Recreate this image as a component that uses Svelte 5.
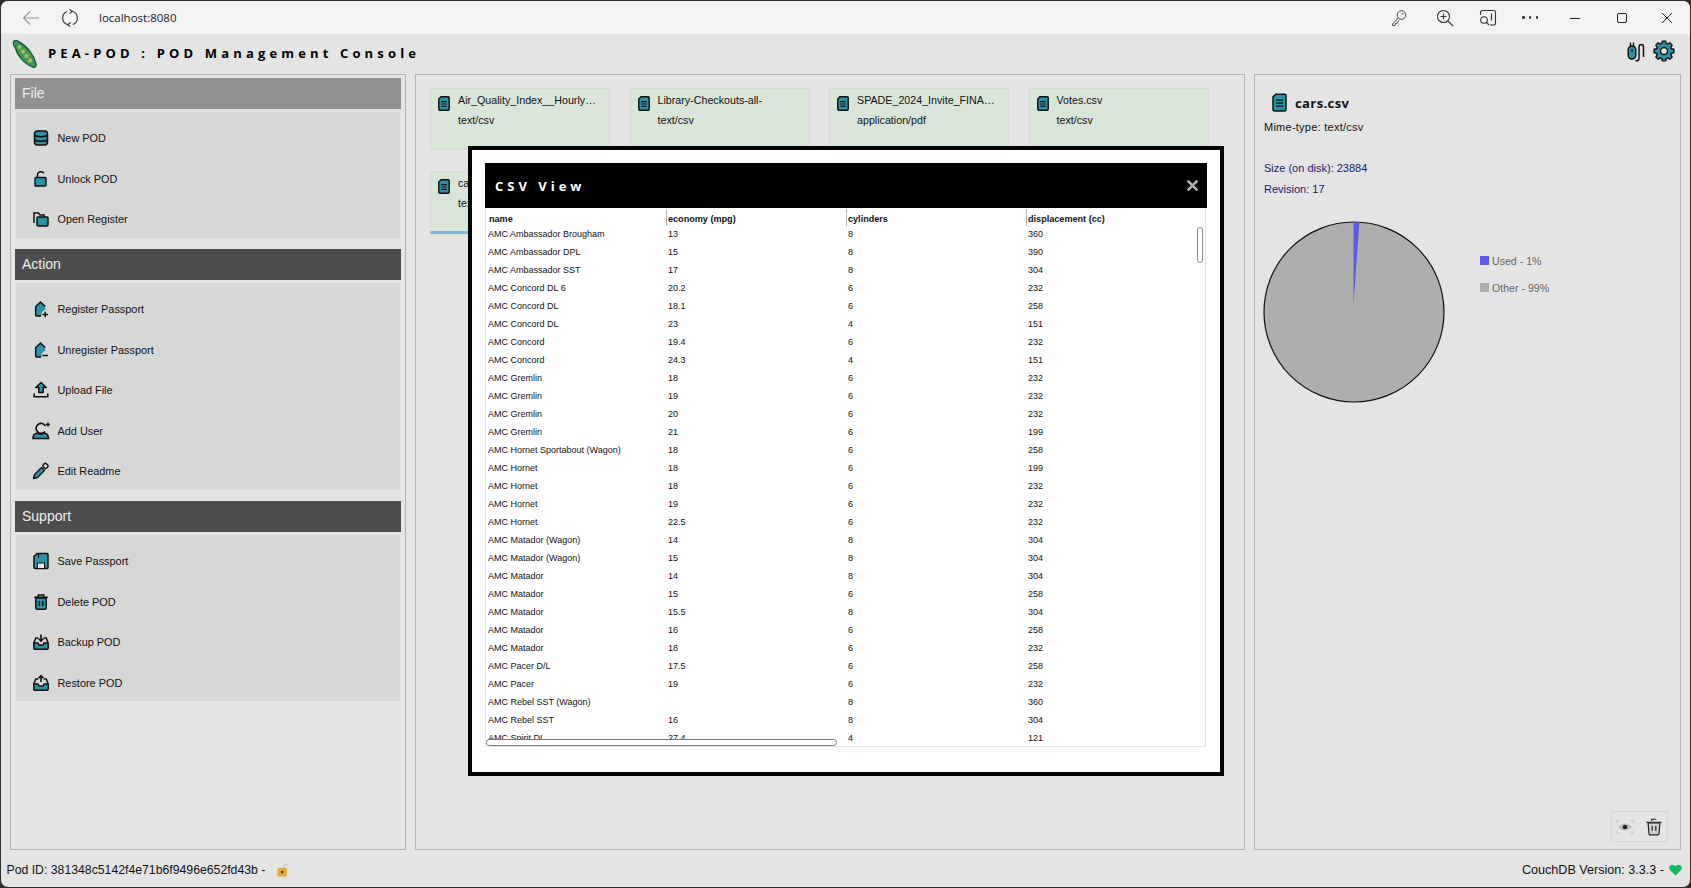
<script>
	const sections = [
		{ title: 'File', muted: true, items: [['New POD', 'db'], ['Unlock POD', 'lock'], ['Open Register', 'folder']] },
		{
			title: 'Action',
			items: [
				['Register Passport', 'regplus'],
				['Unregister Passport', 'regminus'],
				['Upload File', 'upload'],
				['Add User', 'user'],
				['Edit Readme', 'pen']
			]
		},
		{
			title: 'Support',
			items: [['Save Passport', 'save'], ['Delete POD', 'trash'], ['Backup POD', 'backup'], ['Restore POD', 'restore']]
		}
	];

	const files = [
		['Air_Quality_Index__Hourly…', 'text/csv'],
		['Library-Checkouts-all-', 'text/csv'],
		['SPADE_2024_Invite_FINA…', 'application/pdf'],
		['Votes.csv', 'text/csv'],
		['cars.csv', 'text/csv']
	];

	const columns = ['name', 'economy (mpg)', 'cylinders', 'displacement (cc)'];
	const rows = [
		['AMC Ambassador Brougham', '13', '8', '360'],
		['AMC Ambassador DPL', '15', '8', '390'],
		['AMC Ambassador SST', '17', '8', '304'],
		['AMC Concord DL 6', '20.2', '6', '232'],
		['AMC Concord DL', '18.1', '6', '258'],
		['AMC Concord DL', '23', '4', '151'],
		['AMC Concord', '19.4', '6', '232'],
		['AMC Concord', '24.3', '4', '151'],
		['AMC Gremlin', '18', '6', '232'],
		['AMC Gremlin', '19', '6', '232'],
		['AMC Gremlin', '20', '6', '232'],
		['AMC Gremlin', '21', '6', '199'],
		['AMC Hornet Sportabout (Wagon)', '18', '6', '258'],
		['AMC Hornet', '18', '6', '199'],
		['AMC Hornet', '18', '6', '232'],
		['AMC Hornet', '19', '6', '232'],
		['AMC Hornet', '22.5', '6', '232'],
		['AMC Matador (Wagon)', '14', '8', '304'],
		['AMC Matador (Wagon)', '15', '8', '304'],
		['AMC Matador', '14', '8', '304'],
		['AMC Matador', '15', '6', '258'],
		['AMC Matador', '15.5', '8', '304'],
		['AMC Matador', '16', '6', '258'],
		['AMC Matador', '18', '6', '232'],
		['AMC Pacer D/L', '17.5', '6', '258'],
		['AMC Pacer', '19', '6', '232'],
		['AMC Rebel SST (Wagon)', '', '8', '360'],
		['AMC Rebel SST', '16', '8', '304'],
		['AMC Spirit DL', '27.4', '4', '121']
	];

	// 8 toothed gear outline
	function gearPath(cx, cy, outer, inner) {
		const pts = [];
		for (let i = 0; i < 8; i++) {
			const a = (i * Math.PI) / 4;
			for (const [off, r] of [[-0.3, inner], [-0.17, outer], [0.17, outer], [0.3, inner]]) {
				pts.push((cx + r * Math.sin(a + off)).toFixed(2) + ' ' + (cy - r * Math.cos(a + off)).toFixed(2));
			}
		}
		return 'M' + pts.join('L') + 'Z';
	}

	const gear = gearPath(12, 12, 11, 8.4);
</script>

{#snippet fileIcon()}
	<svg class="doc" viewBox="0 0 12 15">
		<path d="M3 .8h7.2a1 1 0 0 1 1 1v11.4a1 1 0 0 1-1 1H1.8a1 1 0 0 1-1-1V3z" fill="#2b93a8" stroke="#111" stroke-width="1.5" />
		<path d="M3.2 5.6h5.6M3.2 8h5.6M3.2 10.4h5.6" stroke="#111" stroke-width="1.1" />
	</svg>
{/snippet}

{#snippet menuIcon(name)}
	<svg class="mi" viewBox="0 0 20 20">
		{#if name === 'db'}
			<rect x="3.5" y="3" width="13" height="14" rx="3" fill="#2b93a8" stroke="#111" stroke-width="1.6" />
			<path d="M3.5 7.5c3 1.6 10 1.6 13 0M3.5 12c3 1.6 10 1.6 13 0" fill="none" stroke="#111" stroke-width="1.5" />
		{:else if name === 'lock'}
			<path d="M6.5 8.5V6a3.4 3.4 0 0 1 6.4-1.5" fill="none" stroke="#111" stroke-width="1.5" />
			<rect x="4" y="8.5" width="11" height="8.5" rx="1" fill="#2b93a8" stroke="#111" stroke-width="1.4" />
		{:else if name === 'folder'}
			<path d="M3 14V4h4.5l1.5 2h4v2" fill="none" stroke="#111" stroke-width="1.5" />
			<rect x="6" y="8" width="11" height="9" rx="1" fill="#2b93a8" stroke="#111" stroke-width="1.5" />
		{:else if name === 'regplus' || name === 'regminus'}
			<path d="M4.8 17V7.5L9.5 3l4.7 4.5V11a4.5 4.5 0 0 0-3.5 6z" fill="#2b93a8" />
			<path d="M10 17H5.6a1 1 0 0 1-.9-1V7.5L9.5 3l4.7 4.5" fill="none" stroke="#111" stroke-width="1.5" />
			{#if name === 'regplus'}
				<path d="M11.5 15.5h5.5M14.2 12.8v5.4" stroke="#111" stroke-width="1.5" />
			{:else}
				<path d="M11.5 15.5h5.5" stroke="#111" stroke-width="1.5" />
			{/if}
		{:else if name === 'upload'}
			<path d="M10 2.5l5.2 5h-3v5H7.8v-5h-3z" fill="#2b93a8" stroke="#111" stroke-width="1.5" stroke-linejoin="round" />
			<path d="M3.2 13.5v3.2h13.6v-3.2" fill="none" stroke="#111" stroke-width="1.6" />
		{:else if name === 'user'}
			<path d="M2 17.5c0-3 1.5-5 4.5-5.5 1.5 1.500 5 1.500 6.500 0 3 .5 4.500 2.500 4.500 5.500z" fill="#2b93a8" stroke="#111" stroke-width="1.6" />
			<path d="M14.500 5A5 5 0 1 0 14 10.500" fill="none" stroke="#111" stroke-width="1.7" />
			<path d="M15 3.500h4M17 1.500v4" stroke="#111" stroke-width="1.4" />
		{:else if name === 'pen'}
			<path d="M2.500 17.500l1-4 7-7 3 3-7 7z" fill="#2b93a8" stroke="#111" stroke-width="1.4" stroke-linejoin="round" />
			<rect x="12.200" y="2.800" width="4.600" height="4.200" rx="1" transform="rotate(45 14.500 4.900)" fill="none" stroke="#111" stroke-width="1.4" />
		{:else if name === 'save'}
			<path d="M6 2.500h10a1 1 0 0 1 1 1v13a1 1 0 0 1-1 1H4a1 1 0 0 1-1-1V5.500z" fill="#2b93a8" stroke="#111" stroke-width="1.5" />
			<rect x="6.500" y="12" width="7" height="5.500" fill="#e8e8e8" stroke="#111" stroke-width="1" />
			<path d="M7.500 3v4" stroke="#111" stroke-width="1" />
		{:else if name === 'trash'}
			<path d="M4.800 6h10.400v10a1.300 1.300 0 0 1-1.300 1.300H6.100A1.300 1.300 0 0 1 4.800 16z" fill="#2b93a8" stroke="#111" stroke-width="1.5" />
			<path d="M3.200 5.200h13.600M7.200 5V3h5.600v2M8.300 9v5M11.700 9v5" fill="none" stroke="#111" stroke-width="1.5" />
		{:else}
			<path d="M2.800 11l2-5h2.500M12.700 6h2.500l2 5" fill="none" stroke="#111" stroke-width="1.5" />
			<path d="M2.800 11h4.200l1 2h4l1-2h4.200v5a1.200 1.200 0 0 1-1.200 1.200H4A1.200 1.200 0 0 1 2.800 16z" fill="#2b93a8" stroke="#111" stroke-width="1.5" />
			{#if name === 'backup'}
				<path d="M10 2.500v6M7.500 6.500L10 9l2.500-2.500" fill="none" stroke="#111" stroke-width="1.6" />
			{:else}
				<path d="M10 9V3M7.500 5.200L10 2.700l2.500 2.500" fill="none" stroke="#111" stroke-width="1.6" />
			{/if}
		{/if}
	</svg>
{/snippet}

<div class="window">
	<div class="titlebar">
		<svg class="tb back" viewBox="0 0 18 18">
			<path d="M17 9H1.500M8 2.500L1.500 9 8 15.500" fill="none" stroke="#9a9a9a" stroke-width="1.1" />
		</svg>
		<svg class="tb reload" viewBox="0 0 18 18">
			<path d="M6.200 2.400A7 7 0 0 0 6.800 15.700M11.800 15.600A7 7 0 0 0 11.200 2.300" fill="none" stroke="#333" stroke-width="1.1" />
			<path d="M8.500 .3L11.200 2.300 8.800 4.500M9.500 13.500L6.800 15.700 9.200 17.700" fill="none" stroke="#333" stroke-width="1.1" />
		</svg>
		<span class="url">localhost:8080</span>
		<div class="tb-right">
			<svg class="tb key" viewBox="0 0 18 18">
				<circle cx="11.500" cy="6" r="4.300" fill="none" stroke="#444" stroke-width="1" />
				<path d="M8.400 9L2.500 15v1.500h2.300l.7-2h1.500l.5-1.600 1.800-1.500" fill="none" stroke="#444" stroke-width="1" />
				<circle cx="12.800" cy="4.800" r=".8" fill="#444" />
			</svg>
			<svg class="tb" viewBox="0 0 18 18">
				<circle cx="7.500" cy="7.500" r="6" fill="none" stroke="#333" stroke-width="1.1" />
				<path d="M12 12l5 5M7.500 4.500v6M4.500 7.500h6" stroke="#333" stroke-width="1.1" />
			</svg>
			<svg class="tb scr" viewBox="0 0 18 18">
				<path d="M1.500 6V3.500a2 2 0 0 1 2-2h11.500a1.500 1.500 0 0 1 1.500 1.500v11.500a1.500 1.500 0 0 1-1.500 1.500H11" fill="none" stroke="#333" stroke-width="1.1" />
				<path d="M12.500 4.500v7" stroke="#333" stroke-width="1.2" />
				<circle cx="5" cy="11" r="3.300" fill="none" stroke="#333" stroke-width="1.1" />
				<path d="M7.500 13.500L10 16" stroke="#333" stroke-width="1.1" />
			</svg>
			<span class="dots"><i></i><i></i><i></i></span>
			<svg class="tb" viewBox="0 0 18 18"><path d="M2 9.500h10" stroke="#222" stroke-width="1" /></svg>
			<svg class="tb" viewBox="0 0 18 18">
				<rect x="4.500" y="4.500" width="9" height="9" rx="1.500" fill="none" stroke="#222" stroke-width="1" />
			</svg>
			<svg class="tb" viewBox="0 0 18 18"><path d="M4 4l10 10M14 4L4 14" stroke="#222" stroke-width="1" /></svg>
		</div>
	</div>

	<header class="app-head">
		<svg class="logo" viewBox="0 0 26 30">
			<path d="M2 2c2-1 4 0 5 1 8 4 15 13 17 22 .3 2-1 4-3 3C12 25 5 16 3 8 1 6 1 3 2 2z" fill="#3d9a5a" stroke="#1c5a3c" stroke-width="1.4" />
			<circle cx="7.500" cy="8" r="2" fill="#a8b94e" />
			<circle cx="11" cy="12.500" r="2.200" fill="#a8b94e" />
			<circle cx="14.500" cy="17" r="2.200" fill="#a8b94e" />
			<circle cx="18" cy="21.500" r="2.200" fill="#a8b94e" />
		</svg>
		<h1>PEA-POD : POD Management Console</h1>
		<div class="head-icons">
			<svg class="plug" viewBox="0 0 18 21">
				<rect x="1.200" y="5" width="7.600" height="13" rx="3.800" fill="#2b93a8" stroke="#111" stroke-width="1.5" />
				<path d="M3.500 5V1.500M6.500 5V1.500M5 8v3" stroke="#111" stroke-width="1.4" />
				<path d="M8.500 19.500c2.500 1 3.500-.5 3.500-2.500V6c0-3.500 4.500-3.500 4.500 0v10" fill="none" stroke="#111" stroke-width="1.5" />
			</svg>
			<svg class="gear" viewBox="0 0 24 24">
				<path d={gear} fill="#2b93a8" stroke="#111" stroke-width="1.5" stroke-linejoin="round" />
				<circle cx="12" cy="12" r="3.800" fill="#e4e4e4" stroke="#111" stroke-width="1.5" />
			</svg>
		</div>
	</header>

	<main class="panels">
		<nav class="panel menu">
			{#each sections as s}
				<section>
					<h2 class:muted={s.muted}>{s.title}</h2>
					<div class="items">
						{#each s.items as [label, icon]}
							<div class="item">
								{@render menuIcon(icon)}
								<span>{label}</span>
							</div>
						{/each}
					</div>
				</section>
			{/each}
		</nav>

		<div class="panel files">
			{#each files as [name, mime], i}
				<div class="card" class:selected={i === 4}>
					{@render fileIcon()}
					<div class="card-text">
						<div>{name}</div>
						<div>{mime}</div>
					</div>
				</div>
			{/each}
		</div>

		<aside class="panel detail">
			<div class="detail-head">
				<svg class="doc big" viewBox="0 0 12 15">
					<path d="M3 .8h7.200a1 1 0 0 1 1 1v11.400a1 1 0 0 1-1 1H1.800a1 1 0 0 1-1-1V3z" fill="#2b93a8" stroke="#111" stroke-width="1.2" />
					<path d="M3.200 5.600h5.600M3.200 8h5.600M3.200 10.400h5.600" stroke="#111" stroke-width="1" />
				</svg>
				<strong>cars.csv</strong>
			</div>
			<p class="mime">Mime-type: text/csv</p>
			<p class="meta first">Size (on disk): 23884</p>
			<p class="meta">Revision: 17</p>
			<div class="chart">
				<svg class="pie" viewBox="0 0 182 182">
					<circle cx="91" cy="91" r="90" fill="#aeaeae" stroke="#111" stroke-width="1.2" />
					<path d="M90.500 83L90.500 1.500H96.400z" fill="#5c5ce6" />
				</svg>
				<ul class="legend">
					<li><i class="used"></i>Used - 1%</li>
					<li><i class="other"></i>Other - 99%</li>
				</ul>
			</div>
			<div class="tools">
				<svg viewBox="0 0 22 22">
					<path d="M2 7V3.500h3.500M16.500 3.500H20V7M20 15v3.500h-3.500M5.500 18.500H2V15" fill="none" stroke="#c8c8c8" stroke-width="1.2" />
					<path d="M3 11c4-5 12-5 16 0-4 5-12 5-16 0z" fill="#c4c4c4" />
					<circle cx="11" cy="11" r="2.600" fill="#222" />
				</svg>
				<svg viewBox="0 0 22 22">
					<path d="M4.500 6.500h13l-1 12a1.500 1.500 0 0 1-1.500 1.200H7a1.500 1.500 0 0 1-1.500-1.200z" fill="#cfcfcf" stroke="#222" stroke-width="1.3" />
					<path d="M2.500 5.800h17M8.500 4V2.500h5M9 10v5M13 10v5" fill="none" stroke="#222" stroke-width="1.3" />
				</svg>
			</div>
		</aside>
	</main>

	<footer class="status">
		<span class="pod">Pod ID: 381348c5142f4e71b6f9496e652fd43b -</span>
		<svg class="padlock" viewBox="0 0 12 14">
			<path d="M7 5V3.500a2.500 2.500 0 0 1 4.500-1" fill="none" stroke="#c9c9c9" stroke-width="1.2" />
			<rect x="0.500" y="5" width="9.500" height="8.500" rx="1" fill="#e2ac3a" />
			<circle cx="5.200" cy="9" r="1.300" fill="#4a3510" />
		</svg>
		<span class="couch">CouchDB Version: 3.3.3 -</span>
		<svg class="heart" viewBox="0 0 14 13">
			<path d="M7 12.500L1 6.500C-.8 4 .7 .8 3.600 .8 5 .8 6.300 1.600 7 2.800 7.700 1.600 9 .8 10.400 .8 13.300 .8 14.800 4 13 6.500z" fill="#10b860" />
		</svg>
	</footer>

	<div class="modal">
		<div class="modal-head">
			<span>CSV View</span>
			<svg viewBox="0 0 12 12"><path d="M1.500 1.500l9 9M10.500 1.500l-9 9" stroke="#b4b4b4" stroke-width="2.400" /></svg>
		</div>
		<div class="table-wrap">
			<table>
				<thead>
					<tr>
						{#each columns as c}
							<th>{c}</th>
						{/each}
					</tr>
				</thead>
				<tbody>
					{#each rows as r}
						<tr>
							{#each r as v}
								<td>{v}</td>
							{/each}
						</tr>
					{/each}
				</tbody>
			</table>
			<div class="thumb-v"></div>
			<div class="thumb-h"></div>
		</div>
	</div>
</div>

<style>
	:global(body) {
		margin: 0;
		background: #2e2e2e;
		overflow: hidden;
	}

	.window {
		position: relative;
		height: 886px;
		width: 1689px;
		margin: 1px;
		border-radius: 7px;
		overflow: hidden;
		background: #e4e4e4;
		display: flex;
		flex-direction: column;
		font-family: 'Liberation Sans', Arial, sans-serif;
		color: #111;
	}

	.titlebar {
		height: 33px;
		flex: none;
		background: #f3f3f3;
		display: flex;
		align-items: center;
		padding-left: 21px;
	}

	.tb {
		width: 18px;
		height: 18px;
		flex: none;
	}

	.reload {
		margin-left: 21px;
	}

	.url {
		margin-left: 20px;
		font-family: 'Open Sans', sans-serif;
		font-size: 11.5px;
		color: #222;
	}

	.tb-right {
		margin-left: auto;
		margin-right: 14px;
		display: flex;
		align-items: center;
		gap: 27px;
	}

	.key {
		margin-right: 1px;
	}

	.scr {
		margin-left: -2px;
	}

	.dots {
		width: 16px;
		margin: 0 3px 0 -2px;
		display: flex;
		justify-content: space-between;
	}

	.dots i {
		width: 2.5px;
		height: 2.5px;
		border-radius: 50%;
		background: #333;
	}

	.app-head {
		height: 40px;
		flex: none;
		display: flex;
		align-items: center;
		padding-left: 11px;
	}

	.logo {
		width: 26px;
		height: 30px;
		flex: none;
	}

	h1 {
		margin: 0 0 2px 10px;
		font-family: 'Open Sans', sans-serif;
		font-size: 13px;
		font-weight: 700;
		letter-spacing: 4.15px;
		color: #000;
		white-space: nowrap;
	}

	.head-icons {
		margin: 0 15px 6px auto;
		display: flex;
		align-items: center;
		gap: 8px;
	}

	.plug {
		width: 18px;
		height: 21px;
	}

	.gear {
		width: 22px;
		height: 22px;
	}

	.panels {
		flex: 1;
		min-height: 0;
		display: grid;
		grid-template-columns: 396px 830px 427px;
		gap: 9px;
		padding-left: 9px;
	}

	.panel {
		border: 1px solid #b4b4b4;
		box-sizing: border-box;
		min-height: 0;
	}

	.menu {
		padding: 3px 4px;
	}

	section + section {
		margin-top: 11px;
	}

	h2 {
		margin: 0;
		height: 31px;
		line-height: 31px;
		padding-left: 7px;
		background: #4d4d4d;
		color: #eee;
		font-size: 14px;
		font-weight: 400;
	}

	h2.muted {
		background: #919191;
	}

	.items {
		display: flow-root;
		margin: 3px 1px 0;
		padding-top: 6px;
		background: #d7d7d7;
	}

	.item {
		height: 40.6px;
		display: flex;
		align-items: center;
		padding-left: 15px;
		gap: 6.5px;
		font-size: 10.9px;
	}

	.item:last-child {
		margin-bottom: -2px;
	}

	.mi {
		width: 20px;
		height: 20px;
		flex: none;
	}

	.files {
		padding: 13px 14px;
		display: grid;
		grid-template-columns: repeat(4, 180px);
		grid-auto-rows: 62px;
		column-gap: 19.5px;
		row-gap: 21px;
	}

	.card {
		box-sizing: border-box;
		background: #dae5da;
		border: 1px solid #d2dcd2;
		padding: 6px 7px;
		display: flex;
		gap: 8px;
		font-size: 10.7px;
	}

	.card.selected {
		height: 63px;
		border-bottom: 3px solid #7fb8d4;
	}

	.doc {
		width: 12px;
		height: 15px;
		flex: none;
		margin-top: 1px;
	}

	.card-text {
		line-height: 20px;
		margin-top: -5px;
		white-space: nowrap;
	}

	.detail {
		position: relative;
		padding: 18px 9px;
	}

	.detail-head {
		display: flex;
		align-items: center;
		gap: 8px;
		padding-left: 8px;
	}

	.doc.big {
		width: 15px;
		height: 19px;
		margin: 0;
	}

	.detail-head strong {
		font-family: 'Open Sans', sans-serif;
		font-size: 13px;
		letter-spacing: 0.4px;
		color: #111;
	}

	p {
		margin: 0;
		font-size: 11px;
	}

	.mime {
		margin-top: 9px;
		letter-spacing: 0.25px;
	}

	.meta {
		color: #1a1a6e;
		line-height: 21px;
	}

	.meta.first {
		margin-top: 25px;
	}

	.chart {
		margin-top: 21px;
		margin-left: -1px;
		display: flex;
		gap: 35px;
	}

	.pie {
		width: 182px;
		height: 182px;
		flex: none;
	}

	.legend {
		list-style: none;
		margin: 26px 0 0;
		padding: 0;
		font-size: 10.6px;
		color: #666;
	}

	.legend li {
		display: flex;
		align-items: center;
		gap: 3px;
		height: 27px;
	}

	.legend i {
		width: 9px;
		height: 9px;
	}

	.legend .used {
		background: #5c5ce6;
	}

	.legend .other {
		background: #aeaeae;
	}

	.tools {
		position: absolute;
		right: 12px;
		bottom: 7px;
		width: 57px;
		height: 31px;
		box-sizing: border-box;
		border: 1px solid #d6d6d6;
		padding: 0 3px;
		display: flex;
		align-items: center;
		justify-content: space-between;
	}

	.tools svg {
		width: 20px;
		height: 20px;
	}

	.status {
		height: 37px;
		flex: none;
		box-sizing: border-box;
		display: flex;
		align-items: center;
		font-size: 12.25px;
		padding: 3px 8px 0 5.5px;
	}

	.padlock {
		width: 12px;
		height: 14px;
		margin-left: 12px;
	}

	.couch {
		margin-left: auto;
		font-size: 12.6px;
	}

	.heart {
		width: 13px;
		height: 12px;
		margin-left: 5px;
	}

	/* dialog sits over the file grid */
	.modal {
		position: absolute;
		left: 467px;
		top: 145px;
		width: 756px;
		height: 630px;
		box-sizing: border-box;
		background: #fff;
		border: 4px solid #000;
		padding: 13px;
		display: flex;
		flex-direction: column;
	}

	.modal-head {
		height: 45px;
		flex: none;
		background: #000;
		display: flex;
		align-items: center;
		justify-content: space-between;
		padding: 0 8px 0 10px;
	}

	.modal-head span {
		font-family: 'Open Sans', sans-serif;
		font-size: 13px;
		font-weight: 700;
		letter-spacing: 4px;
		color: #fff;
	}

	.modal-head svg {
		width: 13px;
		height: 13px;
	}

	.table-wrap {
		position: relative;
		height: 539px;
		margin-right: 1px;
		overflow: hidden;
		box-sizing: border-box;
		border: 1px solid #e4e4e4;
		border-top: 0;
	}

	table {
		border-collapse: collapse;
		table-layout: fixed;
		width: 720px;
		font-size: 9px;
	}

	th {
		height: 19px;
		padding: 3px 0 0 2px;
		text-align: left;
		font-weight: 700;
		font-size: 9.1px;
		width: 180px;
		background: linear-gradient(#b4b4b4, #b4b4b4) left 1px / 1px 17px no-repeat;
		box-sizing: border-box;
	}

	th:first-child {
		background: none;
		padding-left: 3px;
	}

	td {
		height: 18px;
		box-sizing: border-box;
		padding: 0 0 4px 2px;
		white-space: nowrap;
	}

	.thumb-v {
		position: absolute;
		right: 2px;
		top: 19px;
		width: 6px;
		height: 36px;
		box-sizing: border-box;
		background: #fff;
		border: 1px solid #8a8a8a;
		border-radius: 3px;
	}

	.thumb-h {
		position: absolute;
		left: 0;
		bottom: 0;
		width: 351px;
		height: 7px;
		box-sizing: border-box;
		background: #fff;
		border: 1px solid #777;
		border-radius: 4px;
	}
</style>
